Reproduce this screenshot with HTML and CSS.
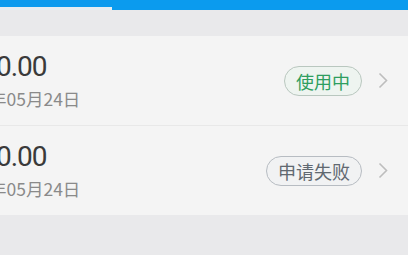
FILE: index.html
```html
<!DOCTYPE html>
<html lang="zh-CN">
<head>
    <meta charset="UTF-8">
    <meta name="viewport" content="width=device-width, initial-scale=1.0">
    <title>申请记录</title>
    <link rel="stylesheet" href="styles.css">
</head>
<body>
    <div class="topbar">
        <div class="tab active"></div>
        <div class="tab"></div>
    </div>
    <div class="gap"></div>
    <div class="list">
        <div class="item">
            <div class="info">
                <div class="amount">0.00</div>
                <div class="date">年05月24日</div>
            </div>
            <span class="badge ok">使用中</span>
            <svg class="arrow" width="10" height="17" viewBox="0 0 10 17"><polyline points="1.5,1.5 8.5,8.5 1.5,15.5" fill="none" stroke="#bdbdbd" stroke-width="1.6"/></svg>
        </div>
        <div class="item">
            <div class="info">
                <div class="amount">0.00</div>
                <div class="date">年05月24日</div>
            </div>
            <span class="badge fail">申请失败</span>
            <svg class="arrow" width="10" height="17" viewBox="0 0 10 17"><polyline points="1.5,1.5 8.5,8.5 1.5,15.5" fill="none" stroke="#bdbdbd" stroke-width="1.6"/></svg>
        </div>
    </div>
</body>
</html>
```

FILE: styles.css
```css
body {
    margin: 0;
    font-family: "Noto Sans CJK SC", "Noto Sans", sans-serif;
    background-color: #e9e9eb;
    overflow: hidden;
}
.topbar {
    display: flex;
    height: 10px;
    background-color: #0b9bee;
}
.tab {
    flex: 1;
}
.tab.active {
    flex: 0 0 112px;
    border-bottom: 3px solid #e6eef2;
}
.gap {
    height: 26px;
}
.list {
    background-color: #f4f4f4;
}
.item {
    display: flex;
    align-items: center;
    height: 89px;
    padding-right: 20px;
    border-bottom: 1px solid #e8e8e8;
}
.item:last-child {
    border-bottom: none;
}
.info {
    flex: 1;
    margin-left: -4px;
}
.amount {
    font-family: "Roboto", "Noto Sans", sans-serif;
    font-size: 28px;
    line-height: 32px;
    color: #3a3a3a;
    letter-spacing: -1px;
}
.date {
    font-size: 17.5px;
    line-height: 24px;
    color: #8a8a8a;
    margin-top: 4px;
    margin-left: -7px;
}
.badge {
    font-size: 18px;
    line-height: 28px;
    padding: 0 11px;
    border-radius: 15px;
    border: 1px solid #b9c7bf;
    margin-right: 16px;
}
.badge.ok {
    color: #2f9e5f;
    background-color: #eef4f0;
}
.badge.fail {
    color: #606870;
    border-color: #b7bcc2;
    background-color: #f1f2f3;
}
.arrow {
    flex: none;
}
```
